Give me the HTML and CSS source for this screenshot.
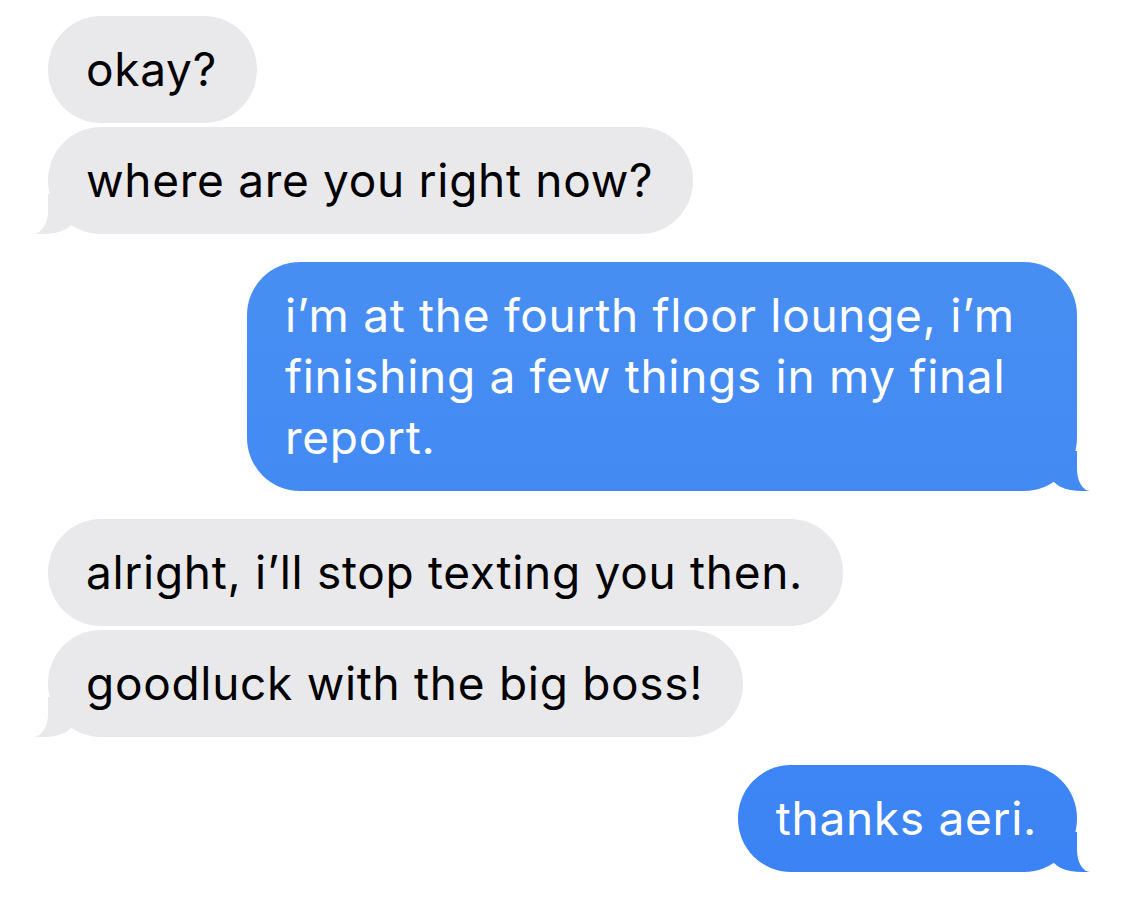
FILE: index.html
```html
<!DOCTYPE html>
<html lang="en">
<head>
  <meta charset="UTF-8">
  <meta name="viewport" content="width=device-width, initial-scale=1.0">
  <title>Messages</title>
  <link rel="stylesheet" href="styles.css">
</head>
<body>
  <div class="thread">
    <div class="group them">
      <div class="bubble">okay?</div>
      <div class="bubble last">where are you right now?</div>
    </div>
    <div class="group me">
      <div class="bubble last">i’m at the fourth floor lounge, i’m finishing a few things in my final report.</div>
    </div>
    <div class="group them">
      <div class="bubble">alright, i’ll stop texting you then.</div>
      <div class="bubble last">goodluck with the big boss!</div>
    </div>
    <div class="group me">
      <div class="bubble last">thanks aeri.</div>
    </div>
  </div>
</body>
</html>
```

FILE: styles.css
```css
body {
  margin: 0;
  background-color: #fff;
  font-family: Inter, "Noto Sans", sans-serif;
}
.thread {
  display: flex;
  flex-direction: column;
  gap: 28px;
  padding: 16px 48px;
}
.group {
  display: flex;
  flex-direction: column;
  gap: 4px;
}
.group.them {
  align-items: flex-start;
}
.group.me {
  align-items: flex-end;
}
.bubble {
  position: relative;
  max-width: 830px;
  box-sizing: border-box;
  padding: 23px 40px 23px 38px;
  border-radius: 53px;
  font-size: 46px;
  line-height: 61px;
  letter-spacing: 0.7px;
}
.them .bubble {
  background-color: #e9e9eb;
  color: #000;
}
.me .bubble {
  background: linear-gradient(#4d93f1, #3b82f5) fixed;
  color: #fff;
}

/* tails */
.bubble.last::before,
.bubble.last::after {
  content: "";
  position: absolute;
  bottom: 0;
  height: 40px;
}
.them .bubble.last::before {
  left: -15px;
  width: 40px;
  background-color: #e9e9eb;
  border-bottom-right-radius: 30px 14px;
}
.them .bubble.last::after {
  left: -40px;
  width: 40px;
  background-color: #fff;
  border-bottom-right-radius: 15px 22px;
}
.me .bubble.last::before {
  right: -13px;
  width: 38px;
  background: linear-gradient(#4d93f1, #3b82f5) fixed;
  border-bottom-left-radius: 30px 14px;
}
.me .bubble.last::after {
  right: -40px;
  width: 40px;
  background-color: #fff;
  border-bottom-left-radius: 13px 22px;
}
```
